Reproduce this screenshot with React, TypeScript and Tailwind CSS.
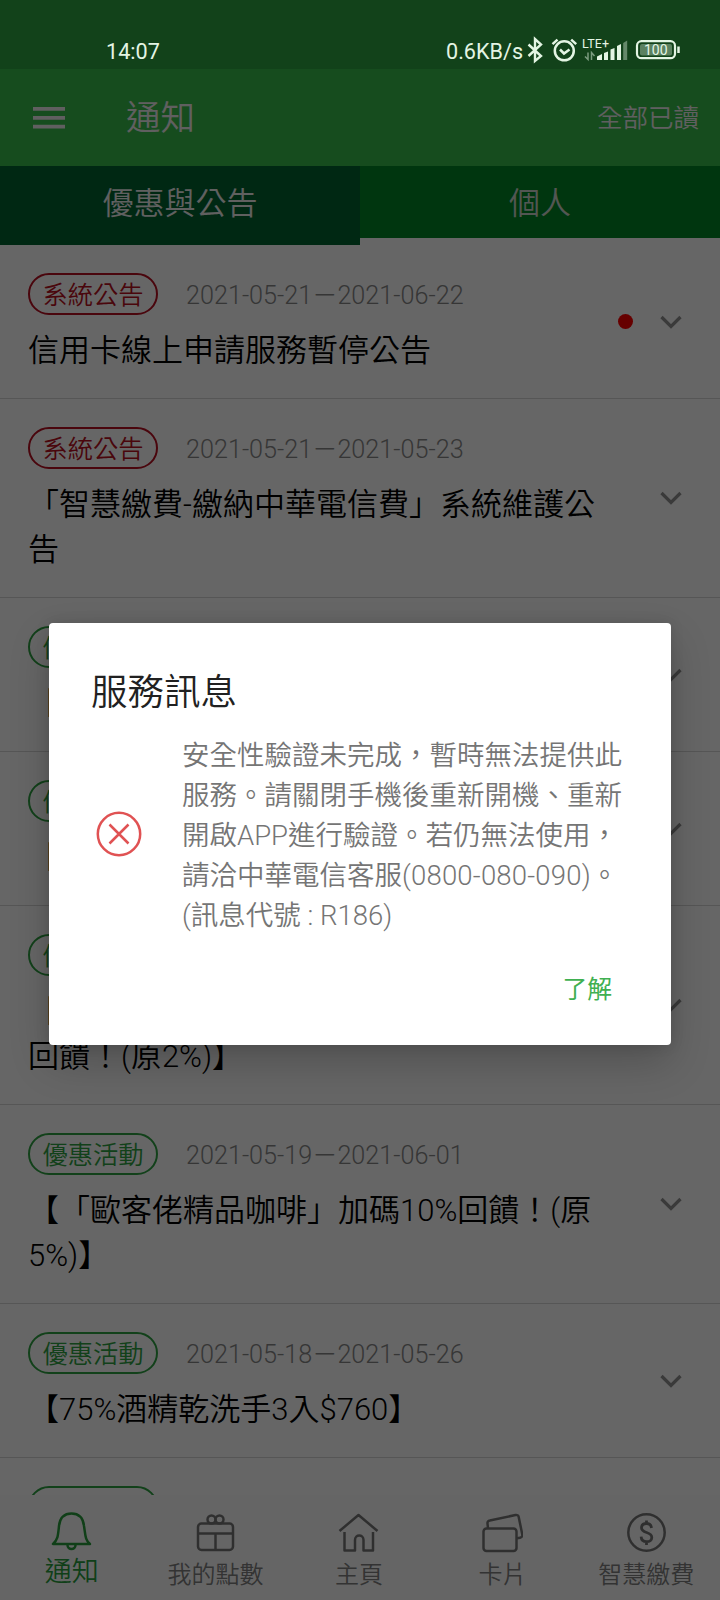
import React from 'react';

type Notice = { kind: 'system' | 'promo'; date: string; lines: string[]; unread?: boolean };

const notices: Notice[] = [
  { kind: 'system', date: '2021-05-21－2021-06-22', lines: ['信用卡線上申請服務暫停公告'], unread: true },
  { kind: 'system', date: '2021-05-21－2021-05-23', lines: ['「智慧繳費-繳納中華電信費」系統維護公', '告'] },
  { kind: 'promo', date: '', lines: ['【'] },
  { kind: 'promo', date: '', lines: ['【'] },
  { kind: 'promo', date: '', lines: ['【', '回饋！(原2%)】'] },
  { kind: 'promo', date: '2021-05-19－2021-06-01', lines: ['【「歐客佬精品咖啡」加碼10%回饋！(原', '5%)】'] },
  { kind: 'promo', date: '2021-05-18－2021-05-26', lines: ['【75%酒精乾洗手3入$760】'] },
  { kind: 'promo', date: '', lines: [''] },
];

function StatusBar() {
  return (
    <div className="relative z-20 flex h-[69px] shrink-0 items-start bg-[#12421a] pt-[38px] text-[21.600px] leading-[27px] font-normal text-[#e4f5e4]">
      <span className="ml-[106px] w-[340px]">14:07</span>
      <span className="w-[77px] whitespace-nowrap">0.6KB/s</span>
      <svg width="160" height="26" viewBox="0 0 160 26" fill="none" stroke="currentColor" className="shrink-0 overflow-visible">
        <path d="M5.5 6.5 18 18 12 23V1l6 5.5L5.5 18" strokeWidth="2.4" />
        <circle cx="41.3" cy="12.8" r="9.5" strokeWidth="2.5" />
        <path d="M37 11.5l4 4 5.5-4" strokeWidth="2.5" />
        <path d="M29.5 6.2l5-4.6M53.2 6.2l-5-4.6" strokeWidth="2.5" />
        <g fill="currentColor" stroke="none">
          <text x="59" y="9.8" fontSize="12.5" fontFamily="Roboto, sans-serif" textLength="27">LTE+</text>
          <path d="M74 18.5l5-2.5v6h-5zM81 15l4-1.5V22h-4zM87.5 11.5l4-1.5v12h-4zM94 8l4-2v16h-4z" />
          <path d="M100.2 5l4-2.5V22h-4z" opacity=".4" />
        </g>
        <path d="M65 14.5v7l-3-3M68.5 22v-7.5l3 3.5" strokeWidth="1.5" opacity=".5" />
        <rect x="114" y="3.2" width="38" height="17" rx="4.5" strokeWidth="2.2" />
        <rect x="117" y="6" width="32" height="11.5" rx="2" fill="currentColor" stroke="none" opacity=".35" />
        <path d="M155.5 8.5v6.5" strokeWidth="2.5" />
        <text x="121" y="16.8" fontSize="14" fill="currentColor" stroke="none" fontFamily="Roboto, sans-serif" textLength="23.5">100</text>
      </svg>
    </div>
  );
}

function Chevron() {
  return (
    <svg width="22" height="14" viewBox="0 0 22 14" fill="none" stroke="#929292" strokeWidth="3.2">
      <path d="M1.5 2l9.5 9.5 9.5-9.5" />
    </svg>
  );
}

function NoticeRow({ notice }: { notice: Notice }) {
  const system = notice.kind === 'system';
  return (
    <li className="flex shrink-0 items-center border-b border-[#d8d8d8] pl-7 pr-[38px]">
      <div className="flex-1 pt-7 pb-[25px]">
        <div className="flex h-[42px] items-center">
          <span
            className={
              system
                ? 'flex h-[42px] w-[130px] items-center justify-center rounded-full border-2 border-[#b80f22] pt-[3px] text-[25.300px] text-[#b80f22]'
                : 'flex h-[42px] w-[130px] items-center justify-center rounded-full border-2 border-[#2fa243] pt-[3px] text-[25.300px] text-[#2fa243]'
            }
          >
            {system ? '系統公告' : '優惠活動'}
          </span>
          <span className="ml-7 pt-[3px] text-[25.200px] text-[#888888]">{notice.date}</span>
        </div>
        <div className="mt-[13px] text-[31px] leading-[45px] text-black">
          {notice.lines.map((line, i) => (
            <p key={i} className="h-[45px] whitespace-nowrap">{line}</p>
          ))}
        </div>
      </div>
      {notice.unread && <i className="mr-[27px] size-[15px] rounded-full bg-[#ff0000]" />}
      <Chevron />
    </li>
  );
}

const navIcons: Record<string, React.ReactNode> = {
  bell: (
    <>
      <path d="M2 32h37c-5-4-4.5-9-6-18C32 5 27 1.5 20.5 1.5S9 5 8 14c-1 9-1 14-6 18z" />
      <path d="M16.5 33c0 5.3 8 5.3 8 0" />
    </>
  ),
  gift: (
    <>
      <rect x="3" y="11.5" width="35" height="26.5" rx="3.5" />
      <path d="M3 21.5h35M20.5 21.5V38" />
      <circle cx="16.5" cy="7.5" r="4" />
      <circle cx="24.5" cy="7.5" r="4" />
    </>
  ),
  home: (
    <path d="M1.5 19 20.5 3 39.5 19M6.5 20v18.5H17V28c0-6 8.5-6 8.5 0v10.5h9.500v-18.500" />
  ),
  cards: (
    <>
      <rect x="1.5" y="16.5" width="33" height="22.5" rx="3" />
      <path d="M6 16.5l-.5-5c-.2-1.6.7-2.8 2.3-3L33.5 3c1.6-.3 2.9.4 3.2 2l3.6 17.500c.3 1.7-.6 3-2.2 3.2l-3.100.5" />
    </>
  ),
  pay: (
    <>
      <circle cx="20.5" cy="20.5" r="18.2" />
      <path d="M25.5 16c-.3-3-2.3-4.500-5-4.500-3 0-5 1.700-5 4.300 0 6.200 10.300 3.200 10.300 9.600 0 2.700-2.200 4.300-5.200 4.300-3 0-5.300-1.800-5.500-5M20.500 8.500v3M20.500 30v3" strokeWidth="2.8" />
    </>
  ),
};

const navItems = [
  { icon: 'bell', label: '通知' },
  { icon: 'gift', label: '我的點數' },
  { icon: 'home', label: '主頁' },
  { icon: 'cards', label: '卡片' },
  { icon: 'pay', label: '智慧繳費' },
];

export default function App() {
  return (
    <div className="relative flex h-[1600px] w-[720px] flex-col overflow-hidden bg-white font-['Roboto','Noto_Sans_CJK_TC',sans-serif] font-[350] [text-spacing-trim:space-all]">
      <StatusBar />
      <header className="flex h-[97px] shrink-0 items-center bg-[#37be4b] pr-[21px] pl-[33px] text-[#f0eef0]">
        <svg width="32" height="22" viewBox="0 0 32 22" fill="currentColor">
          <path d="M0 0h32v3.700H0zM0 9h32v3.700H0zM0 17.700h32v3.700H0z" />
        </svg>
        <h1 className="ml-[61px] flex-1 pt-[3px] text-[34.500px]">通知</h1>
        <button className="pt-px text-[25.500px]">全部已讀</button>
      </header>
      <div className="flex h-[79px] shrink-0 items-start text-[31px] leading-[46px] text-[#efefef]">
        <div className="flex h-[79px] w-1/2 justify-center bg-[#006430] pt-[15px]">優惠與公告</div>
        <div className="flex h-[72px] w-1/2 justify-center bg-[#008726] pt-[15px] text-[#d0d8d0]">個人</div>
      </div>
      <ul className="flex min-h-0 flex-1 flex-col overflow-hidden">
        {notices.map((n, i) => (
          <NoticeRow key={i} notice={n} />
        ))}
      </ul>
      <nav className="grid h-[105px] shrink-0 grid-cols-5 bg-[#fdfdfd] pr-[2px]">
        {navItems.map((item, i) => (
          <div
            key={item.icon}
            className={
              i === 0
                ? 'flex flex-col items-center pt-[17px] text-[27px] leading-9 text-[#2a9f3d]'
                : 'flex flex-col items-center pt-[17px] text-[24px] leading-[42px] text-[#808080]'
            }
          >
            <svg width="41" height="42" viewBox="0 0 41 42" fill="none" stroke={i === 0 ? '#2a9f3d' : '#777777'} strokeWidth="2.5" strokeLinejoin="round" className="shrink-0">
              {navIcons[item.icon]}
            </svg>
            <span className="whitespace-nowrap">{item.label}</span>
          </div>
        ))}
      </nav>

      <div className="absolute inset-x-0 top-[69px] bottom-0 z-10 bg-black/60" />
      <div
        role="dialog"
        className="absolute top-[623.300px] left-[49px] z-30 flex h-[421.300px] w-[622px] flex-col rounded-[4px] bg-white pl-[42px] shadow-[0_18px_40px_rgba(0,0,0,0.200),0_0_14px_rgba(0,0,0,0.120)]"
      >
        <h2 className="mt-[44px] text-[36.500px] leading-[52px] text-[#212121]">服務訊息</h2>
        <div className="mt-[17px] flex items-center">
          <svg width="46" height="46" viewBox="0 0 46 46" fill="none" stroke="#e05253" strokeWidth="2.5" className="-mt-[5px] ml-[5px]">
            <circle cx="23" cy="23" r="21.2" />
            <path d="M13.5 13.5l19 19M32.5 13.5l-19 19" />
          </svg>
          <p className="ml-10 text-[27.500px] leading-10 whitespace-nowrap text-[#757575]">
            安全性驗證未完成，暫時無法提供此<br />
            服務。請關閉手機後重新開機、重新<br />
            開啟APP進行驗證。若仍無法使用，<br />
            請洽中華電信客服<span className="tracking-[0.200px]">(0800-080-090)</span>。<br />
            (訊息代號 : R186)
          </p>
        </div>
        <button className="mt-[36px] mr-[59px] self-end text-[24.800px] leading-9 font-normal text-[#3fb051]">了解</button>
      </div>
    </div>
  );
}
